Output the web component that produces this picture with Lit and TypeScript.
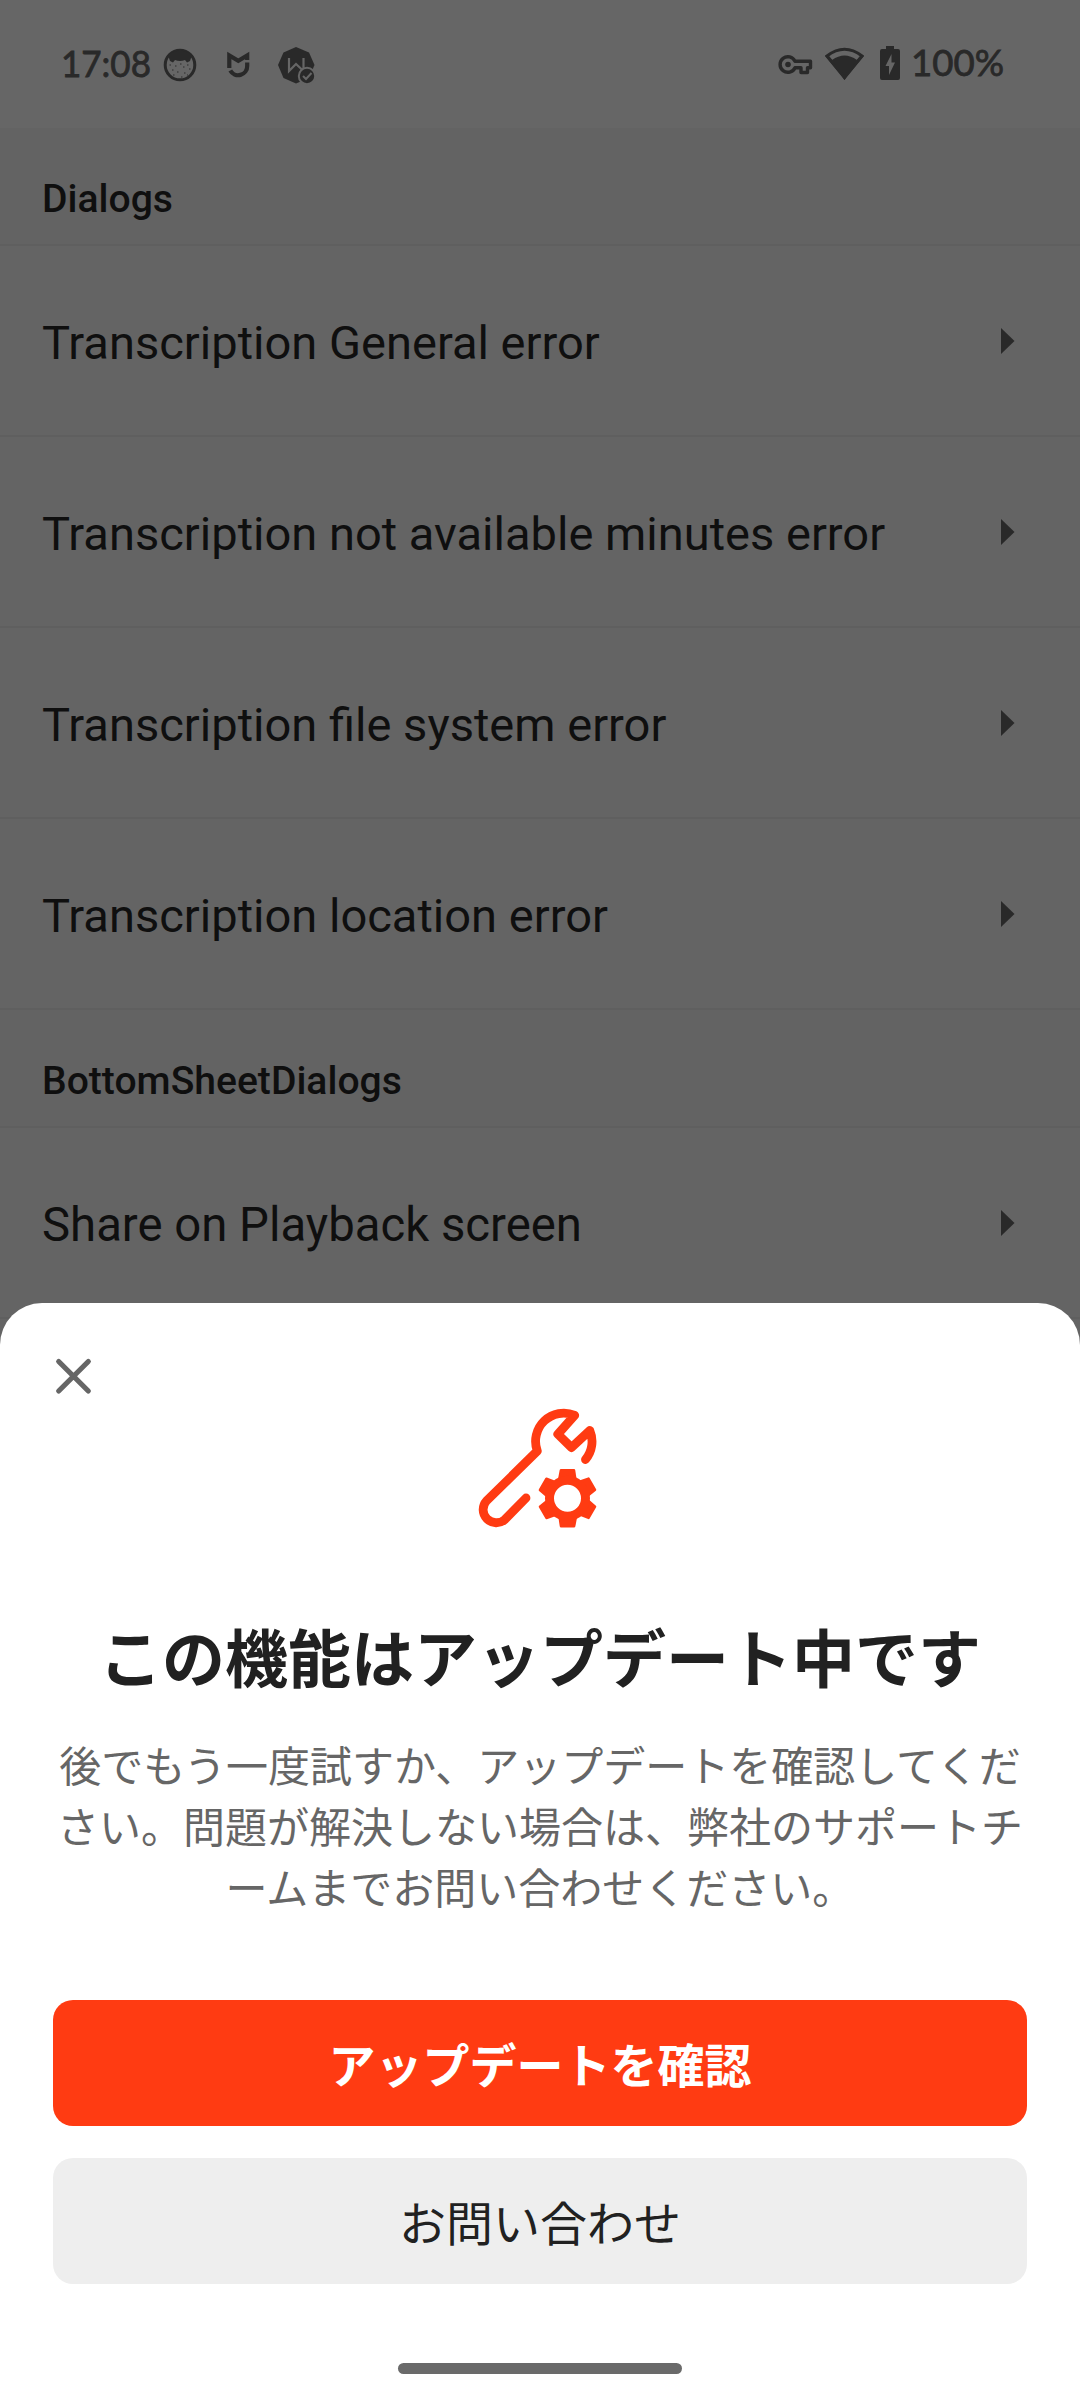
import { LitElement, html, css, svg } from "lit";
import { customElement, property } from "lit/decorators.js";

@customElement("status-bar")
class StatusBar extends LitElement {
  static styles = css`
    :host {
      display: flex;
      height: 128px;
      box-sizing: border-box;
      padding: 0 76px 0 62px;
      background: #666;
      color: #292929;
    }
    .full { display: flex; width: 100%; align-items: center; }
    svg { display: block; flex: none; fill: currentColor; }
    .spacer { flex: 1; }
    text { font: 400 36px Lato, sans-serif; fill: #292929; stroke: #292929; stroke-width: 0.8; }
  `;
  render() {
    return html`<div class="full">
      <svg width="264" height="128" viewBox="62 0 264 128">
        <text x="61" y="77" textLength="90" lengthAdjust="spacingAndGlyphs">17:08</text>
        <circle cx="180" cy="65" r="14.8" fill="none" stroke="#292929" stroke-width="3"></circle>
        <path d="M168 55Q180 46 192 55L190 61L187 62.500L185 60Q180 62 175 60L173 62.500L170 61Z"></path>
        <path d="M169.500 65h1.500M172 70h1.500M175 66h1.500M180 64h1.500M183 67h1.500M187 65h1.500M189 69h1.500M177 72h1.500M184 73h1.500M173 75h1.500M181 77h1.500M187 75h1" stroke="#404040" stroke-width="1.500" fill="none"></path>
        <path d="M229.300 68V55.500L238.300 60.800L247.200 55.500V60" fill="none" stroke="#292929" stroke-width="4.200"></path>
        <path d="M247.200 62.500V66A9 9 0 0 1 230.300 70.500" fill="none" stroke="#292929" stroke-width="4.200"></path>
        <path d="M296 47L309 52.500L314.500 65L309 78L296 83.500L283.500 78L278 65L283.500 52.500Z"></path>
        <path d="M289 58V71L296 64L303.500 71V58" fill="none" stroke="#666" stroke-width="2.200"></path>
        <circle cx="307" cy="76" r="8.200" stroke="#666" stroke-width="2"></circle>
        <path d="M303 76l3 3 5.500-6" fill="none" stroke="#666" stroke-width="2"></path>
      </svg>
      <span class="spacer"></span>
      <svg width="230" height="128" viewBox="774 0 230 128">
        <path fill="none" stroke="#292929" stroke-width="3.400" stroke-linejoin="round" d="M795 61.300A7.800 7.800 0 1 0 795 67.700H801V72.500H807.500V67.700H810.500V61.300Z"></path>
        <circle cx="788" cy="64.500" r="2.800"></circle>
        <path fill="none" stroke="#292929" stroke-width="3" d="M827 56Q844.500 42.500 862 56L844.500 77Z"></path>
        <path d="M832 60Q844.500 51 857 60L844.500 80Z"></path>
        <path d="M825 56L844.500 80L864 56L861 55L844.500 75L828 55Z"></path>
        <path d="M886 46h8v3h4q2 0 2 2v27q0 2-2 2h-16q-2 0-2-2v-27q0-2 2-2h4z"></path>
        <path d="M891.500 54L885.500 66H889V75L895 62.500H891.500Z" fill="#666"></path>
        <text x="911" y="76" textLength="93" lengthAdjust="spacingAndGlyphs">100%</text>
      </svg>
    </div>`;
  }
}

@customElement("menu-section")
class MenuSection extends LitElement {
  @property() heading = "";
  @property({ attribute: false }) items: string[] = [];
  static styles = css`
    :host { display: block; color: #0f0f0f; font: 47.05px Roboto, sans-serif; }
    :host(.loose) { font-size: 47.3px; }
    .heading, .row { box-sizing: border-box; border-bottom: 2px solid #5f5f5f; display: flex; align-items: center; padding-left: 42px; white-space: nowrap; }
    .heading { height: 118px; background: #636363; font-size: 39.1px; font-weight: 500; padding-top: 26px; }
    .row { height: 191px; background: #646464; padding-top: 4px; }
    .row span { flex: 1; }
    svg { flex: none; width: 80px; height: 28px; margin-bottom: 4px; }
  `;
  render() {
    return html`<div class="heading">${this.heading}</div>
      ${this.items.map(
        (item) => html`<div class="row">
          <span>${item}</span>
          <svg viewBox="0 0 80 28"><path fill="#292929" d="M1 1L14.500 14L1 27Z"></path></svg>
        </div>`
      )}`;
  }
}

const gear = Array.from({ length: 6 }, (_, i) =>
  svg`<path transform="rotate(${i * 60} 107.500 108.300)" d="M101 79h13q1 0 1.200 1l2 13h-20l2.500-13q.2-1 1.300-1z"></path>`
);

@customElement("update-sheet")
class UpdateSheet extends LitElement {
  static styles = css`
    :host {
      display: flex;
      flex-direction: column;
      align-items: center;
      box-sizing: border-box;
      height: 1097px;
      padding: 0 53px;
      background: #fff;
      border-radius: 42px 42px 0 0;
      color: #212121;
      font-family: "Noto Sans CJK JP", sans-serif;
    }
    .close { align-self: flex-start; margin: 53px 0 0 0; width: 40px; height: 40px; }
    .tool { width: 160px; height: 160px; margin-top: -6px; }
    h1 { margin: 59px 0 0; font-size: 63px; line-height: 92px; font-weight: 700; white-space: nowrap; }
    p { margin: 32px 0 0; font-size: 42px; line-height: 61px; color: #666; text-align: center; white-space: nowrap; }
    button {
      width: 974px; height: 126px; padding: 0; border: 0; border-radius: 20px;
      font: 400 47px/126px "Noto Sans CJK JP", sans-serif;
      color: #212121; background: #eee;
    }
    .primary { margin: 84px 0 32px; background: #ff3b12; color: #fff; font-weight: 700; }
    .handle { width: 284px; height: 11px; border-radius: 6px; background: #6a6a6a; margin-top: 79px; }
  `;
  render() {
    return html`
      <svg class="close" viewBox="0 0 40 40"><path d="M5.700 5.500L35.300 35M35.300 5.500L5.700 35" stroke="#666" stroke-width="5.200" stroke-linecap="round"></path></svg>
      <svg class="tool" viewBox="0 0 160 160">
        <path fill="none" stroke="#ff3b12" stroke-width="8.800" stroke-linecap="round" stroke-linejoin="round"
          d="M66 108L45 129.400A13.100 13.100 0 0 1 26.500 110.900L77.300 61A28.200 28.200 0 0 1 114.700 25.300L97.800 44.200L111.500 57.500L129.800 40.500A28.200 28.200 0 0 1 125.500 69.500"></path>
        <g fill="#ff3b12">${gear}</g>
        <circle cx="107.500" cy="108.300" r="18" fill="none" stroke="#ff3b12" stroke-width="9"></circle>
      </svg>
      <h1>この機能はアップデート中です</h1>
      <p>後でもう一度試すか、アップデートを確認してくだ<br />さい。問題が解決しない場合は、弊社のサポートチ<br />ームまでお問い合わせください。</p>
      <button class="primary">アップデートを確認</button>
      <button>お問い合わせ</button>
      <div class="handle"></div>
    `;
  }
}

@customElement("app-root")
class AppRoot extends LitElement {
  static styles = css`
    :host { display: block; width: 1080px; height: 2400px; overflow: hidden; background: #646464; }
    .screen { display: grid; grid-template-rows: 1303px 1097px; height: 2400px; }
    .page { min-height: 0; }
    update-sheet { z-index: 1; }
  `;
  render() {
    return html`<div class="screen">
      <div class="page">
        <status-bar></status-bar>
        <menu-section heading="Dialogs" .items=${["Transcription General error", "Transcription not available minutes error", "Transcription file system error", "Transcription location error"]}></menu-section>
        <menu-section class="loose" heading="BottomSheetDialogs" .items=${["Share on Playback screen"]}></menu-section>
      </div>
      <update-sheet></update-sheet>
    </div>`;
  }
}
